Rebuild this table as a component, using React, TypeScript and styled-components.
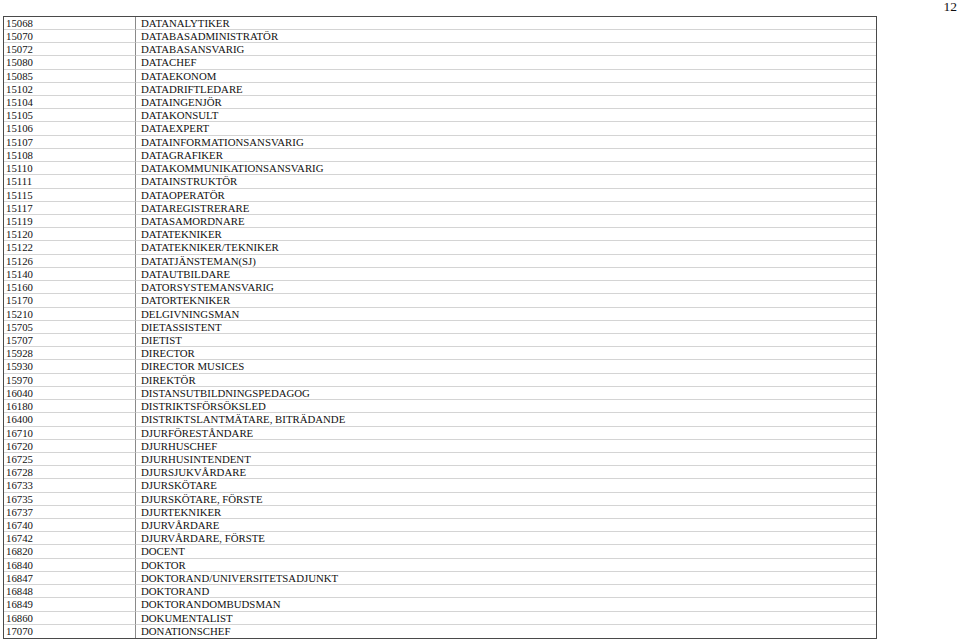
import { FunctionComponent } from 'react'
import styled, { createGlobalStyle } from 'styled-components'

const ROWS: [string, string][] = [
  ['15068', 'DATANALYTIKER'],
  ['15070', 'DATABASADMINISTRATÖR'],
  ['15072', 'DATABASANSVARIG'],
  ['15080', 'DATACHEF'],
  ['15085', 'DATAEKONOM'],
  ['15102', 'DATADRIFTLEDARE'],
  ['15104', 'DATAINGENJÖR'],
  ['15105', 'DATAKONSULT'],
  ['15106', 'DATAEXPERT'],
  ['15107', 'DATAINFORMATIONSANSVARIG'],
  ['15108', 'DATAGRAFIKER'],
  ['15110', 'DATAKOMMUNIKATIONSANSVARIG'],
  ['15111', 'DATAINSTRUKTÖR'],
  ['15115', 'DATAOPERATÖR'],
  ['15117', 'DATAREGISTRERARE'],
  ['15119', 'DATASAMORDNARE'],
  ['15120', 'DATATEKNIKER'],
  ['15122', 'DATATEKNIKER/TEKNIKER'],
  ['15126', 'DATATJÄNSTEMAN(SJ)'],
  ['15140', 'DATAUTBILDARE'],
  ['15160', 'DATORSYSTEMANSVARIG'],
  ['15170', 'DATORTEKNIKER'],
  ['15210', 'DELGIVNINGSMAN'],
  ['15705', 'DIETASSISTENT'],
  ['15707', 'DIETIST'],
  ['15928', 'DIRECTOR'],
  ['15930', 'DIRECTOR MUSICES'],
  ['15970', 'DIREKTÖR'],
  ['16040', 'DISTANSUTBILDNINGSPEDAGOG'],
  ['16180', 'DISTRIKTSFÖRSÖKSLED'],
  ['16400', 'DISTRIKTSLANTMÄTARE, BITRÄDANDE'],
  ['16710', 'DJURFÖRESTÅNDARE'],
  ['16720', 'DJURHUSCHEF'],
  ['16725', 'DJURHUSINTENDENT'],
  ['16728', 'DJURSJUKVÅRDARE'],
  ['16733', 'DJURSKÖTARE'],
  ['16735', 'DJURSKÖTARE, FÖRSTE'],
  ['16737', 'DJURTEKNIKER'],
  ['16740', 'DJURVÅRDARE'],
  ['16742', 'DJURVÅRDARE, FÖRSTE'],
  ['16820', 'DOCENT'],
  ['16840', 'DOKTOR'],
  ['16847', 'DOKTORAND/UNIVERSITETSADJUNKT'],
  ['16848', 'DOKTORAND'],
  ['16849', 'DOKTORANDOMBUDSMAN'],
  ['16860', 'DOKUMENTALIST'],
  ['17070', 'DONATIONSCHEF']
]

const GlobalStyle = createGlobalStyle`
  html, body {
    margin: 0;
    padding: 0;
    background: #fff;
  }
  body {
    font-family: "Liberation Serif", "Times New Roman", serif;
    color: #111;
  }
`

const Page = styled.div`
  display: flex;
  flex-direction: column;
  width: 960px;
  height: 639px;
  padding: 0 3px 0 3px;
  box-sizing: border-box;
  overflow: hidden;
`

const PageNumber = styled.div`
  height: 16px;
  text-align: right;
  font-size: 13.5px;
  line-height: 14px;
  padding-right: 0;
`

const Table = styled.div`
  display: grid;
  grid-template-columns: 132px 1fr;
  grid-auto-rows: 13.22px;
  width: 874px;
  box-sizing: border-box;
  border: 1.5px solid #4a4a4a;
`

const Cell = styled.div<{ $code?: boolean; $last?: boolean }>`
  font-size: 10.8px;
  line-height: 13px;
  padding-left: ${(p) => (p.$code ? '2px' : '5px')};
  border-bottom: ${(p) => (p.$last ? 'none' : '1px solid #d4d4d4')};
  border-right: ${(p) => (p.$code ? '1px solid #8a8a8a' : 'none')};
  white-space: nowrap;
  overflow: hidden;
  box-sizing: border-box;
`

const App: FunctionComponent = () => {
  return (
    <>
      <GlobalStyle />
      <Page>
        <PageNumber>12</PageNumber>
        <Table>
          {ROWS.map(([code, title], i) => {
            const last = i === ROWS.length - 1
            return [
              <Cell key={code + '-c'} $code $last={last}>
                {code}
              </Cell>,
              <Cell key={code + '-t'} $last={last}>
                {title}
              </Cell>
            ]
          })}
        </Table>
      </Page>
    </>
  )
}

export default App
